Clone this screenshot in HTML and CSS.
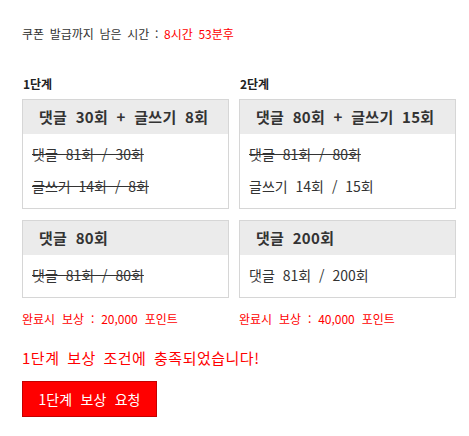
FILE: index.html
```html
<!DOCTYPE html>
<html lang="ko">
<head>
<meta charset="utf-8">
<title>쿠폰</title>
<link rel="stylesheet" href="styles.css">
</head>
<body>
<div class="page">
  <div class="timer">쿠폰 발급까지 남은 시간 : <span class="red">8시간 53분후</span></div>
  <div class="stages">
    <div class="stage stage-1">
      <div class="stage-title">1단계</div>
      <div class="box">
        <div class="box-head">댓글 30회 + 글쓰기 8회</div>
        <div class="box-body">
          <div class="line done">댓글 81회 / 30회</div>
          <div class="line done">글쓰기 14회 / 8회</div>
        </div>
      </div>
      <div class="box">
        <div class="box-head">댓글 80회</div>
        <div class="box-body">
          <div class="line done">댓글 81회 / 80회</div>
        </div>
      </div>
      <div class="reward">완료시 보상 : 20,000 포인트</div>
    </div>
    <div class="stage stage-2">
      <div class="stage-title">2단계</div>
      <div class="box">
        <div class="box-head">댓글 80회 + 글쓰기 15회</div>
        <div class="box-body">
          <div class="line done">댓글 81회 / 80회</div>
          <div class="line">글쓰기 14회 / 15회</div>
        </div>
      </div>
      <div class="box">
        <div class="box-head">댓글 200회</div>
        <div class="box-body">
          <div class="line">댓글 81회 / 200회</div>
        </div>
      </div>
      <div class="reward">완료시 보상 : 40,000 포인트</div>
    </div>
  </div>
  <div class="message">1단계 보상 조건에 충족되었습니다!</div>
  <button class="claim" type="button">1단계 보상 요청</button>
</div>
</body>
</html>
```
FILE: styles.css
```css
html, body {
  margin: 0;
  padding: 0;
  background: #fff;
}
body {
  font-family: "Noto Sans CJK KR", "Noto Sans", sans-serif;
  color: #333;
}
.page {
  padding: 26px 0 20px 22px;
}
.timer {
  font-size: 12px;
  line-height: 16px;
  height: 16px;
  word-spacing: 2.3px;
}
.red {
  color: #ff0000;
}
.stages {
  display: flex;
  gap: 10px;
  margin-top: 32px;
}
.stage {
  display: flex;
  flex-direction: column;
  flex-shrink: 0;
}
.stage-1 {
  width: 207px;
}
.stage-2 {
  width: 217px;
}
.stage-title {
  font-size: 12px;
  font-weight: bold;
  line-height: 20px;
  height: 20px;
  margin-bottom: 5px;
  padding-left: 1px;
  color: #222;
}
.box {
  border: 1px solid #d6d6d6;
  margin-bottom: 11px;
}
.box-head {
  background: #ebebeb;
  height: 34px;
  line-height: 34px;
  font-size: 15px;
  font-weight: bold;
  padding-left: 16px;
  white-space: nowrap;
  color: #333;
  word-spacing: 4px;
  letter-spacing: 0.3px;
}
.box-body {
  padding: 5px 10px 7px 9px;
  display: flex;
  flex-direction: column;
  gap: 2px;
}
.line {
  font-size: 14px;
  line-height: 30px;
  height: 30px;
  white-space: nowrap;
  word-spacing: 4px;
}
.done {
  text-decoration: line-through;
}
.reward {
  margin-top: 2px;
  font-size: 12px;
  line-height: 16px;
  color: #ff0000;
  word-spacing: 3.5px;
}
.message {
  margin-top: 21px;
  font-size: 15px;
  line-height: 20px;
  color: #ff0000;
  word-spacing: 3px;
  letter-spacing: 0.5px;
}
.claim {
  display: block;
  margin-top: 13px;
  width: 135px;
  height: 36px;
  background: #ff0000;
  border: 1px solid #c40000;
  color: #fff;
  font-family: "Noto Sans CJK KR", "Noto Sans", sans-serif;
  font-size: 14px;
  padding: 0;
  word-spacing: 4.5px;
  cursor: pointer;
}
```
